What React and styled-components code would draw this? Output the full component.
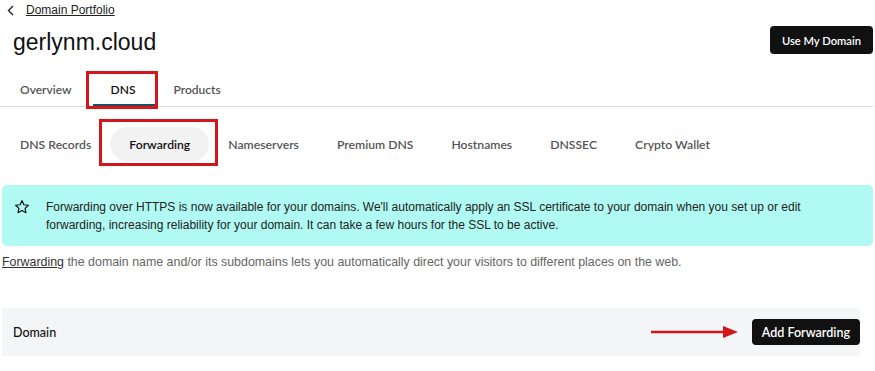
import styled, { createGlobalStyle } from "styled-components";

const GlobalStyle = createGlobalStyle`
  html, body {
    margin: 0;
    background: #fff;
    font-family: "Liberation Sans", Arial, sans-serif;
    color: #111;
  }
`;

const Page = styled.div`
  width: 875px;
  height: 371px;
  overflow: hidden;
  position: relative;
`;

const Crumb = styled.div`
  display: flex;
  align-items: center;
  gap: 12px;
  padding: 2px 0 0 7px;
  height: 16px;
  font-size: 12px;
  a {
    color: #222;
    text-decoration: underline;
  }
`;

const Header = styled.div`
  display: flex;
  align-items: flex-start;
  justify-content: space-between;
  padding: 8px 2px 0 13px;
  height: 40px;
`;

const Title = styled.h1`
  margin: 2px 0 0;
  font-size: 23px;
  line-height: 28px;
  font-weight: 400;
  color: #111;
`;

const DarkButton = styled.button`
  background: #111;
  color: #fff;
  border: none;
  border-radius: 4px;
  font-family: Lato, "Liberation Sans", sans-serif;
  font-weight: 600;
  font-size: ${(p) => p.$size || 12}px;
  height: ${(p) => p.$h || 28}px;
  padding: 0 ${(p) => p.$pad || 12}px;
`;

const TopTabs = styled.div`
  display: flex;
  align-items: center;
  height: 34px;
  margin-top: 6px;
  border-bottom: 1px solid #ddd;
  margin-right: 2px;
`;

const TopTab = styled.div`
  position: relative;
  font-family: Lato, "Liberation Sans", sans-serif;
  font-size: 12px;
  font-weight: 600;
  color: #555;
  padding: 0 ${(p) => p.$pad || 20}px;
  height: 100%;
  display: flex;
  align-items: center;
  ${(p) =>
    p.$active &&
    `
    color: #111;
    &::after {
      content: "";
      position: absolute;
      left: 1px;
      right: 0;
      bottom: 0;
      height: 2px;
      background: #1f4f5f;
    }
  `}
`;

const Highlight = styled.div`
  position: absolute;
  border: 3px solid #d3151c;
  pointer-events: none;
`;

const SubTabs = styled.div`
  display: flex;
  align-items: center;
  height: 34px;
  margin-top: 20px;
  padding-left: 1px;
`;

const SubTab = styled.div`
  font-family: Lato, "Liberation Sans", sans-serif;
  font-size: 12.2px;
  font-weight: 600;
  color: #555;
  height: 34px;
  display: flex;
  align-items: center;
  padding: 0 19px;
  border-radius: 17px;
  ${(p) =>
    p.$active &&
    `
    background: #f2f2f2;
    color: #111;
  `}
`;

const Banner = styled.div`
  display: flex;
  gap: 16px;
  margin: 24px 2px 0 2px;
  background: #b0faf3;
  border-radius: 5px;
  padding: 13px 12px 12px 12px;
  font-size: 12px;
  line-height: 18px;
  color: #222;
  svg {
    flex: none;
    margin-top: 1px;
  }
`;

const Intro = styled.p`
  margin: 9px 0 0 2px;
  font-size: 12.4px;
  color: #666;
  a {
    color: #333;
    text-decoration: underline;
  }
`;

const DomainRow = styled.div`
  display: flex;
  align-items: center;
  justify-content: space-between;
  margin: 39px 15px 0 2px;
  background: #f4f5f6;
  border-radius: 3px;
  height: 48px;
  padding: 0 0 0 11px;
  font-family: Lato, "Liberation Sans", sans-serif;
  font-size: 12.5px;
  font-weight: 500;
`;

const RowRight = styled.div`
  display: flex;
  align-items: center;
  gap: 13px;
`;

export default function App() {
  return (
    <Page>
      <GlobalStyle />
      <Crumb>
        <svg width="7" height="11" viewBox="0 0 7 11">
          <path d="M6 1L1.5 5.5L6 10" fill="none" stroke="#222" strokeWidth="1.4" />
        </svg>
        <a>Domain Portfolio</a>
      </Crumb>
      <Header>
        <Title>gerlynm.cloud</Title>
        <DarkButton $size={11.2}>Use My Domain</DarkButton>
      </Header>
      <TopTabs>
        <TopTab>Overview</TopTab>
        <TopTab $active $pad={19}>DNS</TopTab>
        <TopTab $pad={19}>Products</TopTab>
      </TopTabs>
      <Highlight style={{ left: 86, top: 71, width: 66, height: 32 }} />
      <SubTabs>
        <SubTab>DNS Records</SubTab>
        <SubTab $active>Forwarding</SubTab>
        <SubTab>Nameservers</SubTab>
        <SubTab>Premium DNS</SubTab>
        <SubTab>Hostnames</SubTab>
        <SubTab>DNSSEC</SubTab>
        <SubTab>Crypto Wallet</SubTab>
      </SubTabs>
      <Highlight style={{ left: 99, top: 119, width: 113, height: 41 }} />
      <Banner>
        <svg width="16" height="16" viewBox="0 0 24 24">
          <path
            d="M12 2.5l2.9 6.1 6.6.8-4.9 4.6 1.3 6.6L12 17.3l-5.9 3.3 1.3-6.6-4.9-4.6 6.6-.8z"
            fill="none"
            stroke="#111"
            strokeWidth="1.8"
            strokeLinejoin="round"
          />
        </svg>
        <div>
          Forwarding over HTTPS is now available for your domains. We'll automatically apply an SSL
          certificate to your domain when you set up or edit forwarding, increasing reliability for
          your domain. It can take a few hours for the SSL to be active.
        </div>
      </Banner>
      <Intro>
        <a>Forwarding</a> the domain name and/or its subdomains lets you automatically direct your
        visitors to different places on the web.
      </Intro>
      <DomainRow>
        <span>Domain</span>
        <RowRight>
          <svg width="88" height="14" viewBox="0 0 88 14">
            <line x1="0" y1="7" x2="74" y2="7" stroke="#d3151c" strokeWidth="2.4" />
            <path d="M72 1L87 7L72 13z" fill="#d3151c" />
          </svg>
          <DarkButton $h={26} $pad={10} $size={12.5}>
            Add Forwarding
          </DarkButton>
        </RowRight>
      </DomainRow>
    </Page>
  );
}
